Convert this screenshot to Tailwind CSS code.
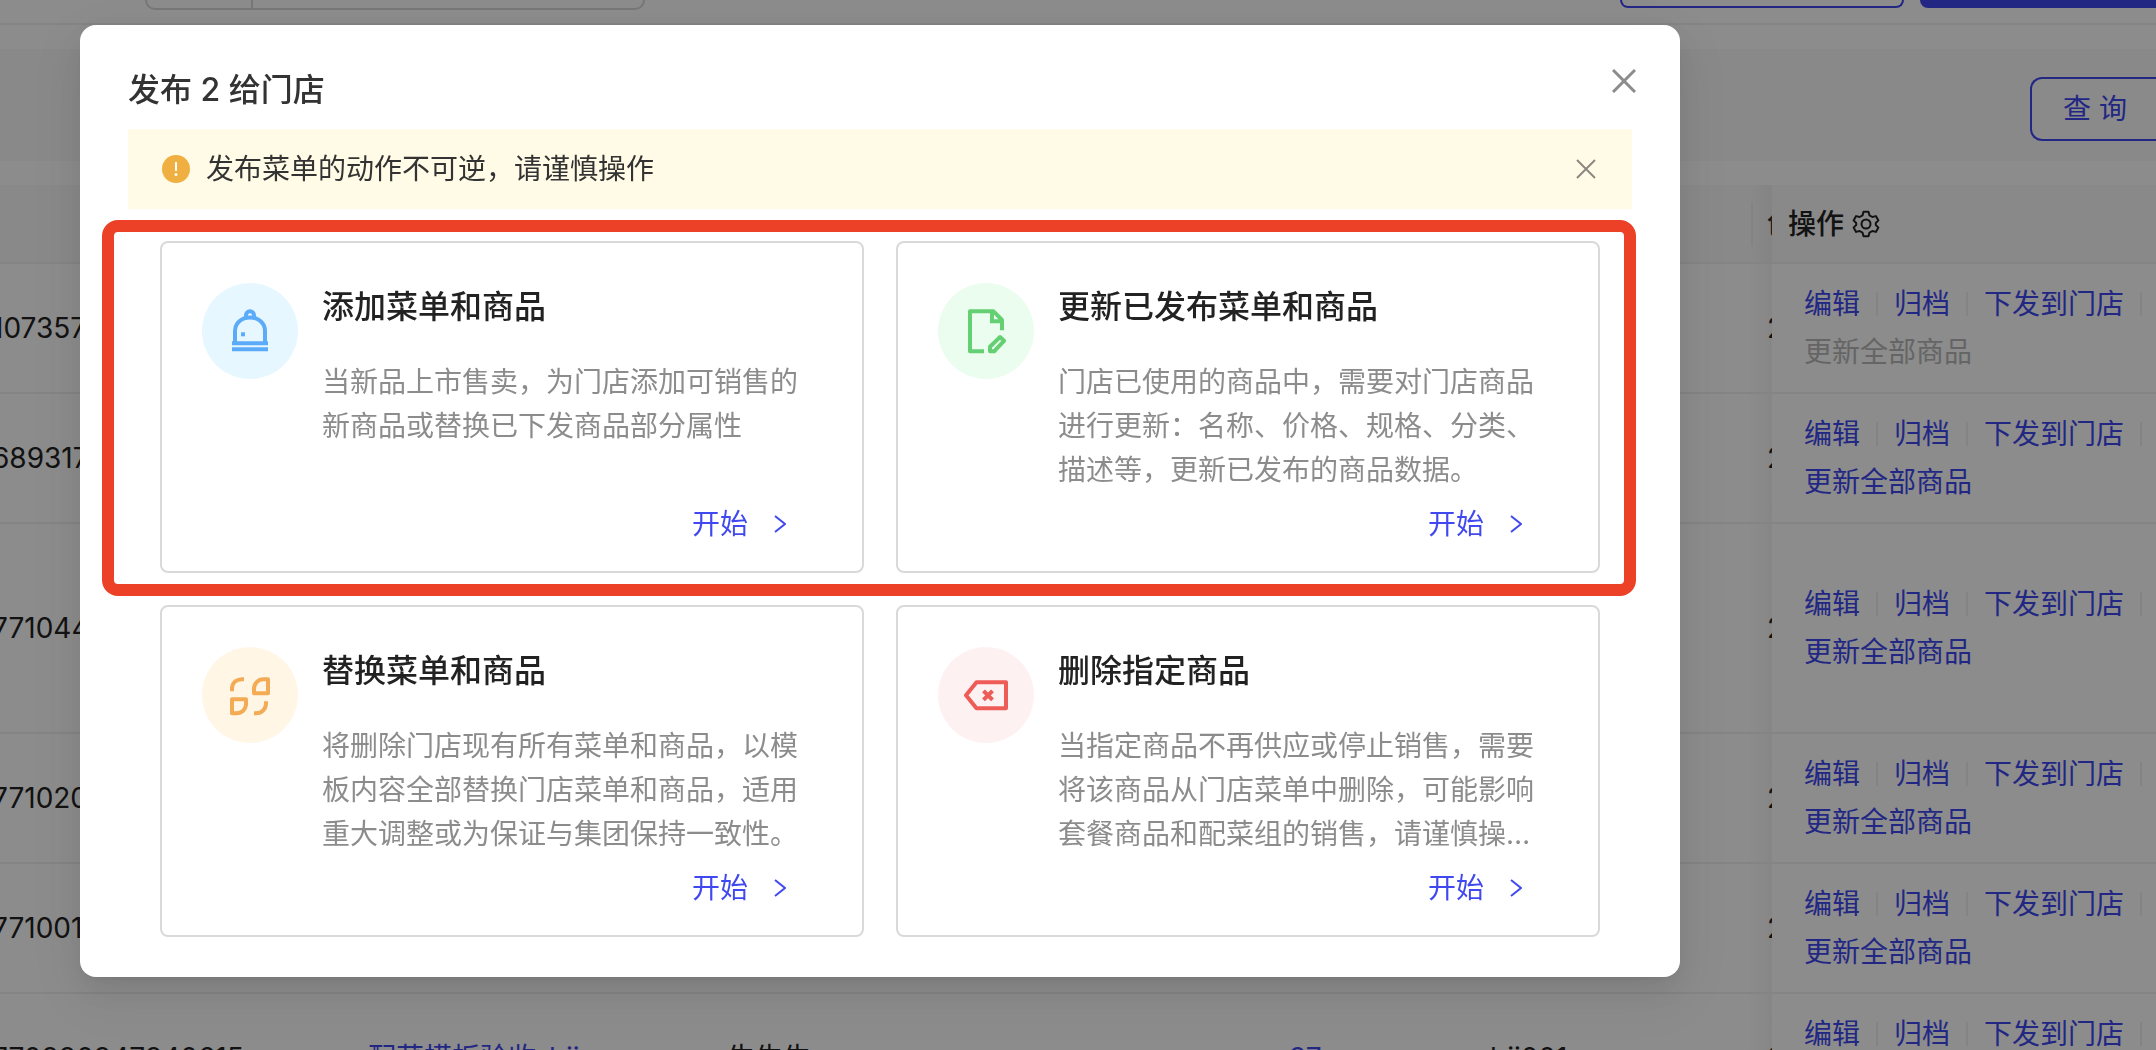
<!DOCTYPE html>
<html lang="zh-CN">
<head>
    <meta charset="UTF-8">
    <meta name="viewport" content="width=device-width, initial-scale=1.0">
    <title>发布给门店</title>
    <script src="https://cdn.jsdelivr.net/npm/@tailwindcss/browser@4"></script>
</head>
<body class="h-screen overflow-hidden bg-white font-[Inter,'Noto_Sans_CJK_SC',sans-serif] text-[28px] leading-[44px] text-[#333]">

    <!-- Page -->
    <div class="h-full overflow-hidden">
        <header class="flex h-[25px] items-start border-b-2 border-[#f0f0f0] pl-[145px]">
            <div class="flex h-[10px] w-[500px] rounded-b-xl border-2 border-t-0 border-[#d9d9d9]">
                <div class="w-[106px] border-r-2 border-[#d9d9d9]"></div>
            </div>
            <div class="ml-auto flex gap-4">
                <button type="button" aria-label="导出" class="h-2 w-[284px] rounded-b-xl border-2 border-t-0 border-[#4048f0]"></button>
                <button type="button" aria-label="新建" class="h-2 w-[236px] rounded-bl-xl bg-[#4048f0]"></button>
            </div>
        </header>

        <div class="mt-6 flex h-28 items-start justify-end bg-[#fafafa] pt-7">
            <button type="button" class="h-16 w-[126px] rounded-l-xl border-2 border-r-0 border-[#4048f0] bg-white/20 pl-[31px] text-left text-[#4048f0]">查 询</button>
        </div>

        <table class="mt-6 -ml-2 w-[calc(100%+8px)] table-fixed text-left">
            <colgroup>
                <col class="w-[376px]">
                <col class="w-[359px]">
                <col class="w-[562px]">
                <col class="w-[201px]">
                <col class="w-[261px]">
                <col class="w-[21px]">
                <col>
            </colgroup>
            <thead>
                <tr class="h-[78px] border-b-2 border-[#f0f0f0] bg-[#fafafa]">
                    <th></th>
                    <th></th>
                    <th></th>
                    <th></th>
                    <th></th>
                    <th class="overflow-hidden p-0 font-medium text-clip whitespace-nowrap">
                        <div class="flex items-center gap-[14px]">
                            <span class="h-11 w-[2px] shrink-0 bg-[#f0f0f0]"></span>
                            <span>创建时间</span>
                        </div>
                    </th>
                    <th class="relative px-4 font-medium text-[#222]">
                        <div class="absolute inset-y-0 right-full w-6 bg-linear-to-l from-black/4 to-transparent"></div>
                        <div class="flex items-center gap-2">
                            <span>操作</span>
                            <svg class="size-7" viewBox="0 0 28 28" fill="none" stroke="currentColor" stroke-width="2" stroke-linejoin="round">
                                <path d="M11.5 1.8h5l1 3.6 2.8 1.6 3.6-.9 2.5 4.3-2.6 2.6v2l2.6 2.6-2.5 4.3-3.6-.9-2.8 1.6-1 3.6h-5l-1-3.6-2.8-1.6-3.6.9-2.5-4.3L4.200 15v-2L1.600 10.400l2.500-4.300 3.600.900 2.800-1.600z"/>
                                <circle cx="14" cy="14" r="4.500"/>
                            </svg>
                        </div>
                    </th>
                </tr>
            </thead>
            <tbody id="rows"></tbody>
        </table>
    </div>

    <!-- Dialog -->
    <div class="fixed inset-0 bg-black/45 pt-[25px] pr-[476px] pl-20">
        <div role="dialog" aria-labelledby="dialogTitle" class="rounded-2xl bg-white px-12 pb-10 shadow-[0_12px_32px_rgba(0,0,0,0.08),0_6px_12px_-8px_rgba(0,0,0,0.12),0_18px_56px_16px_rgba(0,0,0,0.05)]">
            <div class="flex h-[104px] items-start justify-between pt-10">
                <h2 id="dialogTitle" class="text-[32px] leading-[50px] font-medium">发布 2 给门店</h2>
                <button type="button" aria-label="关闭" class="-mr-2 p-1 text-[#8c8c8c]">
                    <svg class="size-6" viewBox="0 0 24 24" fill="none" stroke="currentColor" stroke-width="3">
                        <path d="M1 1l22 22M23 1L1 23"/>
                    </svg>
                </button>
            </div>

            <div class="flex h-20 items-center bg-[#fffbe6] pr-9 pl-[34px]">
                <svg class="size-7" viewBox="0 0 28 28">
                    <circle cx="14" cy="14" r="14" fill="#efb041"/>
                    <path d="M14 7v9" stroke="#fff" stroke-width="2"/>
                    <circle cx="14" cy="19.500" r="1.500" fill="#fff"/>
                </svg>
                <p class="ml-4 flex-1">发布菜单的动作不可逆，请谨慎操作</p>
                <button type="button" aria-label="关闭提示" class="text-[#8a8880]">
                    <svg class="size-5" viewBox="0 0 20 20" fill="none" stroke="currentColor" stroke-width="2">
                        <path d="M1 1l18 18M19 1L1 19"/>
                    </svg>
                </button>
            </div>

            <div class="px-8 pt-8">
                <div class="relative grid grid-cols-2 gap-8">
                    <section class="flex gap-6 rounded-lg border-2 border-[#d9d9d9] px-10 pt-10 pb-[27px]">
                        <svg class="size-24 shrink-0" viewBox="0 0 96 96" fill="none" stroke="#5cabf8" stroke-width="4">
                            <circle cx="48" cy="48" r="48" fill="#e6f7ff" stroke="none"/>
                            <path d="M30 60.300h36M30 66.300h36M33 59V48c0-8 6.500-13.600 15-13.600S63 40 63 48v11"/>
                            <path d="M44 35.500v-3.200a4 4 0 0 1 8 0v3.200"/>
                            <path d="M39 51.300h4"/>
                        </svg>
                        <div class="min-w-0 flex-1">
                            <h3 class="text-[32px] leading-12 font-medium text-[#222]">添加菜单和商品</h3>
                            <p class="mt-[29px] line-clamp-3 h-[132px] text-[#8c8c8c]">当新品上市售卖，为门店添加可销售的新商品或替换已下发商品部分属性</p>
                            <a href="#" class="mt-3 mr-9 flex items-center justify-end gap-[26px] leading-10 text-[#4048f0]">
                                开始
                                <svg class="h-5 w-3" viewBox="0 0 12 20" fill="none" stroke="currentColor" stroke-width="2"><path d="M1 2l10 8-10 8"/></svg>
                            </a>
                        </div>
                    </section>

                    <section class="flex gap-6 rounded-lg border-2 border-[#d9d9d9] px-10 pt-10 pb-[27px]">
                        <svg class="size-24 shrink-0" viewBox="0 0 96 96" fill="none" stroke="#64d073" stroke-width="4">
                            <circle cx="48" cy="48" r="48" fill="#ebfdee" stroke="none"/>
                            <path d="M46 68.300H32v-40h23.500L64 37v10.300" stroke-linejoin="round"/>
                            <path d="M54 28.300v10h10"/>
                            <path d="M52 68.300v-4.600l10-9.700 4 3.800-9.800 10.500z" stroke-linejoin="round"/>
                        </svg>
                        <div class="min-w-0 flex-1">
                            <h3 class="text-[32px] leading-12 font-medium text-[#222]">更新已发布菜单和商品</h3>
                            <p class="mt-[29px] line-clamp-3 h-[132px] text-[#8c8c8c]">门店已使用的商品中，需要对门店商品进行更新：名称、价格、规格、分类、描述等，更新已发布的商品数据。</p>
                            <a href="#" class="mt-3 mr-9 flex items-center justify-end gap-[26px] leading-10 text-[#4048f0]">
                                开始
                                <svg class="h-5 w-3" viewBox="0 0 12 20" fill="none" stroke="currentColor" stroke-width="2"><path d="M1 2l10 8-10 8"/></svg>
                            </a>
                        </div>
                    </section>

                    <!-- highlight frame -->
                    <div class="pointer-events-none absolute -top-[21px] -right-9 -bottom-[23px] -left-[58px] rounded-2xl border-12 border-[#ec4127]"></div>
                </div>

                <div class="mt-8 grid grid-cols-2 gap-8">
                    <section class="flex gap-6 rounded-lg border-2 border-[#d9d9d9] px-10 pt-10 pb-[27px]">
                        <svg class="size-24 shrink-0" viewBox="0 0 96 96" fill="none" stroke="#f3ab56" stroke-width="4" stroke-linejoin="round">
                            <circle cx="48" cy="48" r="48" fill="#fff6e6" stroke="none"/>
                            <path d="M30 44.300V42c0-6 4-9.700 10-9.700h2"/>
                            <path d="M52 46.300V42c0-5.500 4-9.700 9.500-9.700H66v14z"/>
                            <path d="M30 52.300h14V57c0 5.300-4.200 9.300-9.500 9.300H30z"/>
                            <path d="M64 54.300V56c0 6-4 10.300-10 10.300h-2"/>
                        </svg>
                        <div class="min-w-0 flex-1">
                            <h3 class="text-[32px] leading-12 font-medium text-[#222]">替换菜单和商品</h3>
                            <p class="mt-[29px] line-clamp-3 h-[132px] text-[#8c8c8c]">将删除门店现有所有菜单和商品，以模板内容全部替换门店菜单和商品，适用重大调整或为保证与集团保持一致性。</p>
                            <a href="#" class="mt-3 mr-9 flex items-center justify-end gap-[26px] leading-10 text-[#4048f0]">
                                开始
                                <svg class="h-5 w-3" viewBox="0 0 12 20" fill="none" stroke="currentColor" stroke-width="2"><path d="M1 2l10 8-10 8"/></svg>
                            </a>
                        </div>
                    </section>

                    <section class="flex gap-6 rounded-lg border-2 border-[#d9d9d9] px-10 pt-10 pb-[27px]">
                        <svg class="size-24 shrink-0" viewBox="0 0 96 96" fill="none" stroke="#ee5c58" stroke-width="4" stroke-linejoin="round">
                            <circle cx="48" cy="48" r="48" fill="#fef1f1" stroke="none"/>
                            <path d="M68 35.300H38.500L28 48.300l10.500 13H68z"/>
                            <path d="M45.500 43.800l9 9M54.500 43.800l-9 9"/>
                        </svg>
                        <div class="min-w-0 flex-1">
                            <h3 class="text-[32px] leading-12 font-medium text-[#222]">删除指定商品</h3>
                            <p class="mt-[29px] line-clamp-3 h-[132px] text-[#8c8c8c]">当指定商品不再供应或停止销售，需要将该商品从门店菜单中删除，可能影响套餐商品和配菜组的销售，请谨慎操作。</p>
                            <a href="#" class="mt-3 mr-9 flex items-center justify-end gap-[26px] leading-10 text-[#4048f0]">
                                开始
                                <svg class="h-5 w-3" viewBox="0 0 12 20" fill="none" stroke="currentColor" stroke-width="2"><path d="M1 2l10 8-10 8"/></svg>
                            </a>
                        </div>
                    </section>
                </div>
            </div>
        </div>
    </div>

    <script>
        const rows = [
            { id: '107357', height: 'h-[130px]', disabled: true },
            { id: '689317', height: 'h-[130px]' },
            { id: '771044', height: 'h-[210px]' },
            { id: '771020', height: 'h-[130px]' },
            { id: '771001', height: 'h-[130px]' },
            { id: '770990947940615', height: 'h-[130px]', name: '配菜模板验收-bij', brand: '牛牛牛', count: '97', user: 'bij001' }
        ];

        document.getElementById('rows').innerHTML = rows.map(row => `
            <tr class="${row.height} border-b-2 border-[#f0f0f0] text-[#222]">
                <td class="p-0">${row.id}</td>
                <td class="p-0"><a href="#" class="text-[#4048f0]">${row.name || ''}</a></td>
                <td class="p-0">${row.brand || ''}</td>
                <td class="p-0"><a href="#" class="text-[#4048f0]">${row.count || ''}</a></td>
                <td class="p-0">${row.user || ''}</td>
                <td class="overflow-hidden p-0 pl-4 text-clip whitespace-nowrap">2023</td>
                <td class="relative p-0 pl-8 leading-12 whitespace-nowrap text-[#4048f0]">
                    <div class="absolute inset-y-0 right-full w-6 bg-linear-to-l from-black/4 to-transparent"></div>
                    <div class="flex items-center gap-4">
                        <a href="#">编辑</a>
                        <span class="h-6 w-[2px] bg-[#f0f0f0]"></span>
                        <a href="#">归档</a>
                        <span class="h-6 w-[2px] bg-[#f0f0f0]"></span>
                        <a href="#">下发到门店</a>
                        <span class="h-6 w-[2px] bg-[#f0f0f0]"></span>
                    </div>
                    <a href="#" class="block ${row.disabled ? 'text-[#b8b8b8]' : ''}">更新全部商品</a>
                </td>
            </tr>`).join('');
    </script>
</body>
</html>
